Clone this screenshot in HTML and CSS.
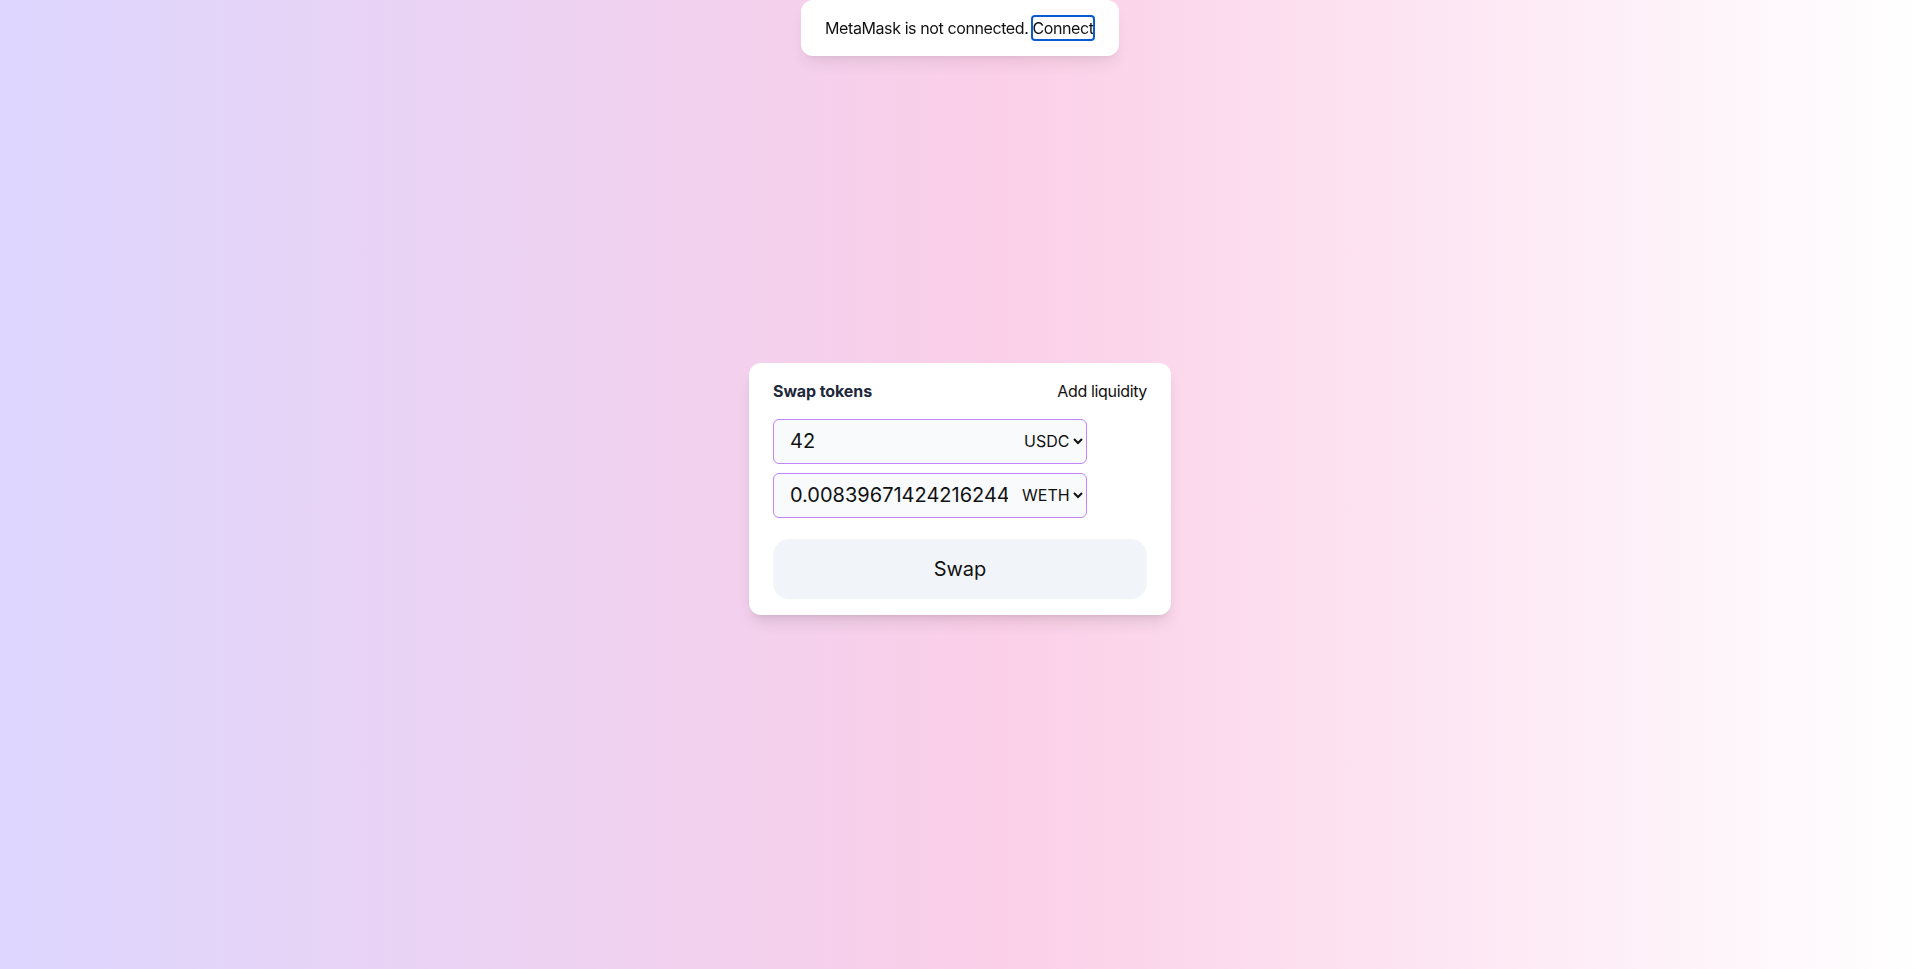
FILE: index.html
```html
<!DOCTYPE html>
<html lang="en">
<head>
<meta charset="utf-8">
<title>Swap</title>
<link rel="stylesheet" href="styles.css">
</head>
<body>
<div class="toast">
  <span>MetaMask is not connected.</span> <button class="connect">Connect</button>
</div>
<main class="page">
  <section class="card">
    <div class="card-head">
      <span class="title">Swap tokens</span>
      <span class="link">Add liquidity</span>
    </div>
    <div class="fields">
      <div class="field">
        <input class="amount" type="text" value="42">
        <select class="token"><option>USDC</option></select>
      </div>
      <div class="field">
        <input class="amount" type="text" value="0.008396714242162444">
        <select class="token"><option>WETH</option></select>
      </div>
    </div>
    <button class="swap">Swap</button>
  </section>
</main>
</body>
</html>
```
FILE: styles.css
```css
* { box-sizing: border-box; }
html, body { margin: 0; padding: 0; }
body {
  min-height: 100vh;
  font-family: Inter, "Noto Sans", "Liberation Sans", sans-serif;
  color: #111;
  background: linear-gradient(to right, #ddd6fe, #fbcfe8 52%, #ffffff);
}
.toast {
  position: fixed;
  top: 0;
  left: 50%;
  transform: translateX(-50%);
  width: 318px;
  height: 56px;
  padding: 16px 24px 16px;
  background: #fff;
  border-radius: 12px;
  box-shadow: 0 10px 15px -3px rgba(0,0,0,.08), 0 4px 6px -4px rgba(0,0,0,.08);
  font-size: 16px;
  line-height: 24px;
  letter-spacing: -0.4px;
  white-space: nowrap;
  color: #111;
}
.connect {
  font: inherit;
  letter-spacing: inherit;
  color: #111;
  background: none;
  border: none;
  padding: 0;
  margin: 0;
  line-height: 24px;
  outline: 2px solid #0b5bd0;
  outline-offset: -1px;
  border-radius: 3px;
}
.page {
  min-height: 100vh;
  display: flex;
  align-items: center;
  justify-content: center;
  padding-top: 8px;
}
.card {
  width: 422px;
  padding: 16px 24px;
  background: #fff;
  border-radius: 12px;
  box-shadow: 0 10px 15px -3px rgba(0,0,0,.1), 0 4px 6px -4px rgba(0,0,0,.1);
}
.card-head {
  display: flex;
  justify-content: space-between;
  line-height: 24px;
  font-size: 16px;
  margin-bottom: 16px;
}
.title { font-weight: 700; color: #1e293b; letter-spacing: -0.1px; }
.link { color: #111; letter-spacing: -0.35px; }
.fields {
  display: flex;
  flex-direction: column;
  gap: 9px;
}
.field {
  display: flex;
  align-items: center;
  width: 314px;
  height: 45px;
  border: 1px solid #c084fc;
  border-radius: 6px;
  background: #f8fafc;
}
.amount {
  flex: 1;
  min-width: 0;
  height: 100%;
  border: none;
  background: transparent;
  padding: 0 0 0 16px;
  font-family: inherit;
  font-size: 20px;
  color: #111;
  outline: none;
}
.token {
  border: none;
  background: transparent;
  font-family: inherit;
  font-size: 16px;
  color: #111;
  padding: 0;
  margin: 0 0 0 10px;
  height: 100%;
  outline: none;
}
.swap {
  display: block;
  width: 100%;
  height: 60px;
  margin-top: 21px;
  border: none;
  border-radius: 16px;
  background: #f1f5f9;
  font-family: inherit;
  font-size: 20px;
  color: #111;
}
```
